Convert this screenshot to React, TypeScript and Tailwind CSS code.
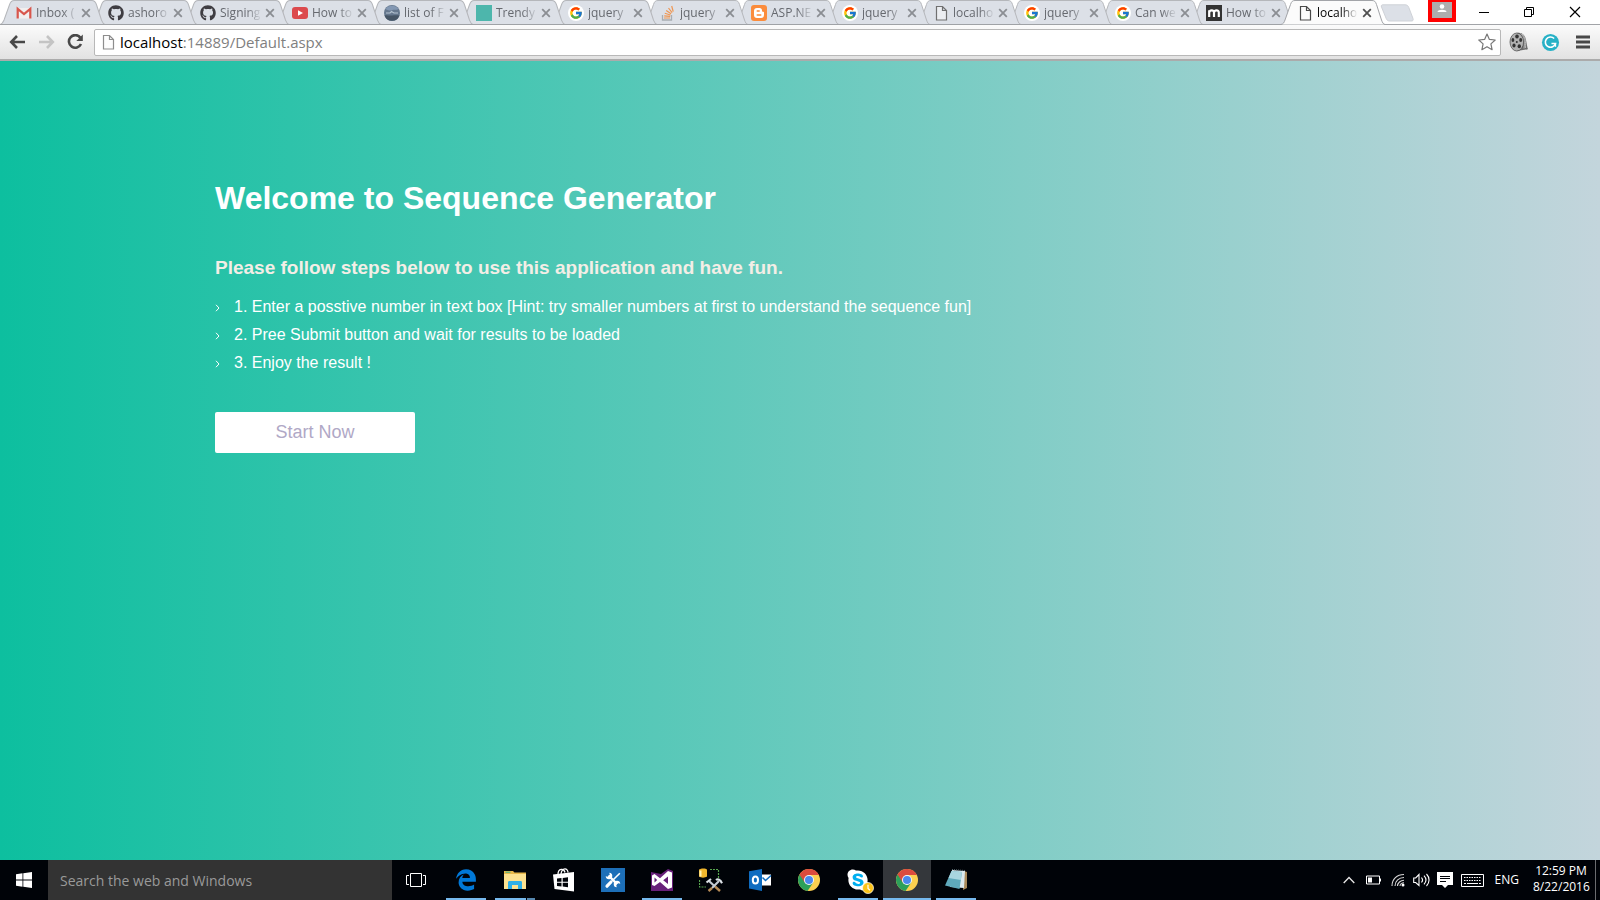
import type { ReactNode } from "react";
import { FaEdgeLegacy, FaGithub, FaSkype } from "react-icons/fa6";
import { FcGoogle } from "react-icons/fc";

/* ---------- favicons ---------- */

const GmailIcon = () => (
  <svg viewBox="0 0 16 16" className="size-4">
    <rect x="1.5" y="3" width="13" height="10.500" fill="#f1eeee" />
    <path d="M1.700 13.500V3.800L8 9l6.300-5.200v9.700" fill="none" stroke="#d8564c" strokeWidth="2.200" />
  </svg>
);

const GithubIcon = () => <FaGithub className="size-4 text-[#3f3d42]" />;

const YoutubeIcon = () => (
  <svg viewBox="0 0 16 16" className="size-4">
    <rect x="0" y="2" width="16" height="12" rx="3" fill="#dc4a4d" />
    <path d="M6 5.200v5.600L11 8z" fill="#fff" />
  </svg>
);

const SphereIcon = () => (
  <svg viewBox="0 0 16 16" className="size-4">
    <circle cx="8" cy="8" r="8" fill="#66788e" />
    <path d="M1.500 4a8 8 0 0 1 13 0c-2 1.500-4 0-6 1S4 5.500 1.500 4z" fill="#8398b3" />
    <path d="M.5 10.500c3-1 5 .5 7.500 0s5-.5 7.500 0a8 8 0 0 1-15 0z" fill="#465565" />
    <path d="M2 8h4l1.500-1.500L10 8h4" fill="none" stroke="#b4c2cf" strokeWidth="1.200" />
  </svg>
);

const SwatchIcon = () => <span className="block size-4 bg-[#4db6ac]" />;

const GoogleIcon = () => (
  <span className="flex size-4 items-center justify-center rounded-full bg-white">
    <FcGoogle className="size-3.5" />
  </span>
);

const StackIcon = () => (
  <svg viewBox="0 0 16 16" className="size-4" fill="none">
    <path d="M2.500 10v5h9v-5" stroke="#a8adb3" strokeWidth="1.300" />
    <path d="M4 13h6M4.200 10.800l6 .6M4.800 8.300l5.700 1.700M6.200 5.500l4.900 3.200M8.500 3l3.600 4.700M11.700 1l1.500 5.600" stroke="#ef9550" strokeWidth="1.200" />
  </svg>
);

const BloggerIcon = () => (
  <svg viewBox="0 0 16 16" className="size-4">
    <rect width="16" height="16" rx="3" fill="#fb8c3c" />
    <path
      d="M6 3h2.500A2.500 2.500 0 0 1 11 5.500c0 1 .3 1.300 1.200 1.300.5 0 .8.300.8.800V10a3 3 0 0 1-3 3H6a3 3 0 0 1-3-3V6a3 3 0 0 1 3-3z"
      fill="#fff"
    />
    <path d="M6.200 6h2M6.200 10h3.600" stroke="#fb8c3c" strokeWidth="1.400" strokeLinecap="round" />
  </svg>
);

const PageIcon = ({ stroke = "#707070" }: { stroke?: string }) => (
  <svg viewBox="0 0 16 16" className="size-4" fill="none">
    <path d="M3.500 1.500h6l4 4v9.500h-10zM9.500 1.500v4h4" fill="#fbfbfb" fillOpacity=".5" stroke={stroke} strokeWidth="1.200" />
  </svg>
);

const MIcon = () => (
  <svg viewBox="0 0 16 16" className="size-4">
    <rect width="16" height="16" fill="#333" />
    <path d="M3.200 12V5.200M3.200 7.500C3.500 5 8 4.300 8 7.500V12M8 7.500C8.300 5 12.800 4.300 12.800 7.500V12" fill="none" stroke="#fff" strokeWidth="2.200" />
  </svg>
);

/* ---------- browser chrome ---------- */

type Tab = { title: string; icon: ReactNode; wide?: boolean; active?: boolean };

const tabs: Tab[] = [
  { title: "Inbox (", icon: <GmailIcon />, wide: true },
  { title: "ashoro", icon: <GithubIcon />, wide: true },
  { title: "Signing", icon: <GithubIcon />, wide: true },
  { title: "How to", icon: <YoutubeIcon />, wide: true },
  { title: "list of F", icon: <SphereIcon />, wide: true },
  { title: "Trendy", icon: <SwatchIcon />, wide: true },
  { title: "jquery", icon: <GoogleIcon />, wide: true },
  { title: "jquery", icon: <StackIcon /> },
  { title: "ASP.NE", icon: <BloggerIcon /> },
  { title: "jquery", icon: <GoogleIcon /> },
  { title: "localho", icon: <PageIcon /> },
  { title: "jquery", icon: <GoogleIcon /> },
  { title: "Can we", icon: <GoogleIcon /> },
  { title: "How to", icon: <MIcon /> },
  { title: "localho", icon: <PageIcon stroke="#4a4a4a" />, active: true },
];

function BrowserTab({ tab, order }: { tab: Tab; order: number }) {
  return (
    <li
      className={tab.wide ? "relative flex min-w-0 flex-[92]" : "relative flex min-w-0 flex-[91]"}
      style={{ zIndex: order }}
    >
      <svg
        viewBox="0 0 104 25"
        preserveAspectRatio="none"
        className="absolute top-0 left-0 h-[25px] w-[calc(100%+13px)]"
      >
        <path
          d="M0 24.500C2.500 24 3 22.500 4 20L9.500 4.500C10.500 1.500 11.500.5 14 .5H91C93.500.5 94.500 1.500 95.500 4.500L100.500 20C101.500 22.500 102 24 104 24.500"
          fill={tab.active ? "#fbfbfb" : "#dce0e7"}
          stroke={tab.active ? "#a2a4a8" : "#b5b7bb"}
        />
        {!tab.active && <path d="M0 24.500H104" stroke="#9fa2a6" />}
      </svg>
      <div className="relative flex h-6 w-full min-w-0 items-center pt-0.5 pl-4">
        <span className="shrink-0">{tab.icon}</span>
        <a
          href="#tab"
          className={
            tab.active
              ? "ml-1 w-11 shrink-0 font-['Open_Sans','Noto_Sans',sans-serif] text-xs whitespace-nowrap text-black [mask-image:linear-gradient(to_right,black_55%,transparent_92%)]"
              : "ml-1 w-11 shrink-0 font-['Open_Sans','Noto_Sans',sans-serif] text-xs whitespace-nowrap text-[#66696f] [mask-image:linear-gradient(to_right,black_60%,transparent_96%)]"
          }
        >
          {tab.title}
        </a>
        <button type="button" aria-label="Close tab" className="ml-px shrink-0">
          <svg viewBox="0 0 10 10" className="size-2.5">
            <path d="M1.200 1.200l7.600 7.600M8.800 1.200L1.200 8.800" stroke={tab.active ? "#505050" : "#8b8e93"} strokeWidth="1.800" />
          </svg>
        </button>
      </div>
    </li>
  );
}

function TabStrip() {
  return (
    <div className="flex h-[25px] bg-white shadow-[inset_0_-1px_0_#a2a4a8]">
      <ul className="isolate flex min-w-0 flex-1">
        {tabs.map((tab, i) => (
          <BrowserTab key={i} tab={tab} order={tab.active ? 30 : 20 - i} />
        ))}
      </ul>
      <div className="flex h-6 w-[228px] shrink-0 items-start pl-2">
        <button type="button" aria-label="New tab" className="mt-1">
          <svg viewBox="0 0 34 18" className="h-[18px] w-[34px]">
            <path d="M3 .8H25C27 .8 28 1.500 28.800 3.500L33 14.500C33.500 16.500 33 17 31 17H10C8 17 7 16.500 6.200 14.500L1.500 3C1 1.500 1.500.8 3 .8z" fill="#dce0e7" stroke="#cfd2d7" />
          </svg>
        </button>
        <button type="button" aria-label="Profile" className="ml-[14px] border-4 border-t-2 border-[#f00] bg-[#adadad]">
          <svg viewBox="0 0 20 16" className="h-4 w-5">
            <circle cx="10" cy="4.500" r="2.300" fill="#fff" />
            <path d="M5.500 10C5.500 7 14.500 7 14.500 10z" fill="#fff" />
          </svg>
        </button>
        <button type="button" aria-label="Minimize" className="ml-[22px] pt-1.5">
          <svg viewBox="0 0 12 12" className="size-3"><path d="M1 6.500H11" stroke="#000" /></svg>
        </button>
        <button type="button" aria-label="Restore" className="ml-[33px] pt-1.5">
          <svg viewBox="0 0 12 12" className="size-3" fill="none" stroke="#000">
            <path d="M1.500 3.500h7v7h-7zM3.500 3.500v-2h7v7h-2" />
          </svg>
        </button>
        <button type="button" aria-label="Close" className="ml-[34px] pt-1.5">
          <svg viewBox="0 0 12 12" className="size-3" fill="none" stroke="#000" strokeWidth="1.200">
            <path d="M1 1l10 10M11 1L1 11" />
          </svg>
        </button>
      </div>
    </div>
  );
}

function Toolbar() {
  return (
    <div className="flex h-9 items-center border-b-2 border-[#ababab] bg-linear-to-b from-[#fbfbfb] to-[#e2e2e2] pr-2.5 pl-[9px]">
      <button type="button" aria-label="Back">
        <svg viewBox="0 0 16 16" className="size-4" fill="none" stroke="#484848" strokeWidth="2.600">
          <path d="M2 8H16M8 2L2.200 8 8 14" />
        </svg>
      </button>
      <button type="button" aria-label="Forward" className="ml-[14px]">
        <svg viewBox="0 0 16 16" className="size-4" fill="none" stroke="#c4c4c4" strokeWidth="2.600">
          <path d="M0 8H14M8 2l5.800 6L8 14" />
        </svg>
      </button>
      <button type="button" aria-label="Reload" className="ml-3">
        <svg viewBox="0 0 16 16" className="size-4">
          <path d="M13.300 3.600A6.300 6.300 0 1 0 14 10" fill="none" stroke="#484848" strokeWidth="2.600" />
          <path d="M15.800.5V7H9.300z" fill="#484848" />
        </svg>
      </button>
      <div className="ml-[11px] flex h-[27px] min-w-0 flex-1 items-center rounded-xs border border-[#b8b8b8] bg-white pr-1 pl-[5px]">
        <PageIcon stroke="#8d8d8d" />
        <a
          href="#address"
          className="ml-1 flex-1 font-['Open_Sans','Noto_Sans',sans-serif] text-[15px] leading-6 text-[#808080]"
        >
          <span className="text-black">localhost</span>:14889/Default.aspx
        </a>
        <button type="button" aria-label="Bookmark this page">
          <svg viewBox="0 0 18 18" className="size-[18px]">
            <path d="M9 1l2.400 5.400 5.800.6-4.300 3.900 1.200 5.800L9 13.700l-5.100 3 1.200-5.800L.8 7l5.800-.6z" fill="#fff" stroke="#777" strokeWidth="1.200" strokeLinejoin="round" />
          </svg>
        </button>
      </div>
      <button type="button" aria-label="Film extension" className="ml-2">
        <svg viewBox="0 0 20 20" className="size-5">
          <path d="M8 1c5-1 8 2 9 7l1.500 8c1 1 0 2-1.500 1.500L8 19z" fill="#6a6a6a" />
          <path d="M11 1.500c4 2 5 8 4 15M13 2c3 2.500 4 8 3.500 14" fill="none" stroke="#c9c9c9" strokeWidth=".8" />
          <ellipse cx="7.800" cy="10" rx="6.800" ry="9" fill="#b2b2b2" stroke="#555" strokeWidth=".8" />
          <g fill="#333">
            <ellipse cx="8" cy="4.600" rx="1.800" ry="2" />
            <ellipse cx="3.900" cy="8" rx="1.400" ry="1.900" />
            <ellipse cx="11.700" cy="8" rx="1.500" ry="2" />
            <ellipse cx="5" cy="13.500" rx="1.600" ry="1.900" />
            <ellipse cx="10.300" cy="14.300" rx="1.700" ry="2" />
            <circle cx="7.800" cy="10" r="1" />
          </g>
        </svg>
      </button>
      <button type="button" aria-label="Grammar extension" className="ml-3">
        <svg viewBox="0 0 20 20" className="size-[19px]">
          <circle cx="10" cy="10" r="9" fill="#27b1c6" />
          <path d="M13.800 5.800A5.400 5.400 0 1 0 15.200 11H11" fill="none" stroke="#fff" strokeWidth="1.700" />
          <path d="M15.300 10.500v4" stroke="#fff" strokeWidth="1.300" />
        </svg>
      </button>
      <button type="button" aria-label="Menu" className="ml-4">
        <svg viewBox="0 0 14 14" className="size-[14px]">
          <path d="M0 2h14M0 7h14M0 12h14" stroke="#484848" strokeWidth="3" />
        </svg>
      </button>
    </div>
  );
}

/* ---------- page ---------- */

const steps = [
  "1. Enter a posstive number in text box [Hint: try smaller numbers at first to understand the sequence fun]",
  "2. Pree Submit button and wait for results to be loaded",
  "3. Enjoy the result !",
];

function WelcomePage() {
  return (
    <main className="flex-1 bg-linear-to-r/srgb from-[#0dbf9f] to-[#c3d5dc] px-4 pt-[114px] font-['Liberation_Sans',Arial,sans-serif]">
      <div className="mx-auto max-w-[1170px]">
        <h1 className="text-[32px] leading-[46px] font-bold text-white">Welcome to Sequence Generator</h1>
        <h2 className="mt-[33px] text-[19px] leading-7 font-bold text-[#f3eee6]">
          Please follow steps below to use this application and have fun.
        </h2>
        <ul className="mt-[11px] text-base leading-7 text-white">
          {steps.map((step) => (
            <li key={step} className="flex items-center">
              <svg viewBox="0 0 6 8" className="mt-0.5 mr-[13px] h-2 w-1.5" fill="none">
                <path d="M1 .8L4 4 1 7.200" stroke="#fff" />
              </svg>
              {step}
            </li>
          ))}
        </ul>
        <button
          type="button"
          className="mt-[35px] h-[41px] w-[200px] rounded-xs bg-white pb-0.5 text-lg text-[#b0a8c6]"
        >
          Start Now
        </button>
      </div>
    </main>
  );
}

/* ---------- taskbar ---------- */

const ExplorerIcon = () => (
  <svg viewBox="0 0 24 24" className="size-6">
    <path d="M1 3h9l1.500 1.500H23V21H1z" fill="#e9b94a" />
    <path d="M1 6h22v15H1z" fill="#fde290" />
    <path d="M5 21v-6.500c0-1 .6-1.500 1.500-1.500h11c1 0 1.500.5 1.500 1.500V21h-4v-4h-6v4z" fill="#2fb0e8" />
    <path d="M2.500 4.200h5" stroke="#3bb58c" />
  </svg>
);

const StoreIcon = () => (
  <svg viewBox="0 0 24 24" className="size-6">
    <path d="M6 6.500C6 0 12 0 13 4.500M9 6C10-1 16 0 16 4.500" fill="none" stroke="#fff" strokeWidth="1.300" />
    <path d="M1 6.500L22 4v19.500L2.500 21z" fill="#fff" />
    <path d="M5 10.500l4.500-.5v3.700H5zM10.700 9.900l5.300-.6v4.400h-5.300zM5 14.800h4.500v3.700L5 18zM10.700 14.800H16v4.400l-5.300-.6z" fill="#000308" />
  </svg>
);

const ToolsIcon = () => (
  <svg viewBox="0 0 24 24" className="size-6">
    <rect width="24" height="24" fill="#1d6fb8" />
    <path d="M7.500 7.500l8.500 8.500" stroke="#fff" strokeWidth="2.400" />
    <path d="M8.300 4.700A3.300 3.300 0 1 1 4.700 8.300L7 8.800 8.800 7zM19.300 15.700a3.300 3.300 0 1 0-3.600 3.600L15.300 17l1.700-1.700z" fill="#fff" />
    <path d="M18.800 5.200L11 13" stroke="#fff" strokeWidth="1.600" />
    <path d="M10 14l-4 4.200" stroke="#fff" strokeWidth="3.200" strokeLinecap="round" />
  </svg>
);

const VisualStudioIcon = () => (
  <svg viewBox="0 0 24 24" className="size-6">
    <path d="M1 4l10 2 7-5 5 2v20H1z" fill="#68217a" />
    <path d="M18 3l4 1.500v15L18 21l-8-7-5.500 4L2 17V7.500L4.500 6l5.500 4.300zM18 8.500l-4.800 3.800 4.800 3.700zM4.500 9.500v5L7.200 12z" fill="#fff" fillRule="evenodd" />
  </svg>
);

const DatabaseToolsIcon = () => (
  <svg viewBox="0 0 24 24" className="size-6" fill="none">
    <path d="M0 1.500C2 0 7 0 8 1.500v7C6 10 2 10 0 8.500z" fill="#f0b62c" />
    <path d="M1.500 2.500v6" stroke="#fff2b5" strokeWidth="2" />
    <path d="M11 1.500h8.500V10M.5 12v7H7" stroke="#57a44e" strokeWidth="1.200" strokeDasharray="2 1" />
    <path d="M10 13l6 5.500" stroke="#c5ccd3" strokeWidth="2.200" />
    <path d="M16 18.500l5 4.500" stroke="#b58a55" strokeWidth="2.400" />
    <path d="M20 13L13 20" stroke="#c5ccd3" strokeWidth="2.200" />
    <path d="M13 20L9.500 23" stroke="#b58a55" strokeWidth="2.400" />
    <path d="M7.500 14.500l4.500-3.500M17 12c1.500-1.200 3-.8 4.500.7l1.500 2.500" stroke="#dbe1e6" strokeWidth="2.200" />
  </svg>
);

const OutlookIcon = () => (
  <svg viewBox="0 0 24 24" className="size-6">
    <path d="M1 3.200L14 1v22L1 20.500z" fill="#0f6cc0" />
    <ellipse cx="7.400" cy="12" rx="2.600" ry="3.600" fill="none" stroke="#fff" strokeWidth="2" />
    <path d="M14 6.500h9v11h-9z" fill="#fff" />
    <path d="M14.500 9.500l3 3L23 7.500" fill="none" stroke="#0f6cc0" strokeWidth="1.500" />
  </svg>
);

const ChromeIcon = () => (
  <svg viewBox="0 0 24 24" className="size-6">
    <circle cx="12" cy="12" r="11" fill="#fcd04f" />
    <path d="M12 12L2.500 6.500A11 11 0 0 0 10.500 22.900L16.300 14.500z" fill="#2da05a" />
    <path d="M2.500 6.500A11 11 0 0 1 21.900 7H12L7.700 14.500z" fill="#dc4b3e" />
    <circle cx="12" cy="12" r="5" fill="#f4f6f8" />
    <circle cx="12" cy="12" r="4" fill="#4a88ee" />
  </svg>
);

const SkypeIcon = () => (
  <span className="relative block size-6">
    <span className="absolute top-1 left-1 block size-4 rounded-full bg-[#00aff0]" />
    <FaSkype className="relative size-6 text-white" />
    <svg viewBox="0 0 12 12" className="absolute -right-1 -bottom-0.5 size-3">
      <circle cx="6" cy="6" r="5.500" fill="#fcc419" stroke="#fff" strokeWidth=".7" />
      <path d="M6 2.800V6.500l2 1.700" fill="none" stroke="#fff" strokeWidth="1.200" />
    </svg>
  </span>
);

const NotepadIcon = () => (
  <svg viewBox="0 0 24 24" className="size-6">
    <path d="M20 3l3 1v16l-4 2z" fill="#a9895a" />
    <path d="M8 2l13 1-1 17-14-1z" fill="#dce9ee" />
    <path d="M7.500 3L18 4 15.500 21 1 17.500z" fill="#5fa9bb" />
    <path d="M7.500 3L18 4 16.800 12 4.500 10z" fill="#a9d5df" />
    <path d="M8 1.500l13 1" stroke="#5b6b70" strokeDasharray="1 1" />
  </svg>
);

type AppEntry = { name: string; icon: ReactNode; state?: "open" | "multiple" | "active" };

const apps: AppEntry[] = [
  { name: "Microsoft Edge", icon: <FaEdgeLegacy className="size-[22px] text-[#0078d7]" />, state: "open" },
  { name: "File Explorer", icon: <ExplorerIcon />, state: "multiple" },
  { name: "Store", icon: <StoreIcon /> },
  { name: "Support tools", icon: <ToolsIcon /> },
  { name: "Visual Studio", icon: <VisualStudioIcon />, state: "open" },
  { name: "Database tools", icon: <DatabaseToolsIcon /> },
  { name: "Outlook", icon: <OutlookIcon /> },
  { name: "Chrome", icon: <ChromeIcon /> },
  { name: "Skype", icon: <SkypeIcon />, state: "open" },
  { name: "Chrome window", icon: <ChromeIcon />, state: "active" },
  { name: "Notepad", icon: <NotepadIcon />, state: "open" },
];

function AppButton({ app }: { app: AppEntry }) {
  return (
    <button
      type="button"
      aria-label={app.name}
      className={
        app.state === "active"
          ? "relative flex h-10 w-12 items-center justify-center bg-[#34373b]"
          : "relative flex h-10 w-12 items-center justify-center"
      }
    >
      {app.icon}
      {app.state === "open" && <span className="absolute inset-x-1 bottom-0 h-0.5 bg-[#76b9ed]" />}
      {app.state === "active" && <span className="absolute inset-x-0 bottom-0 h-0.5 bg-[#76b9ed]" />}
      {app.state === "multiple" && (
        <span className="absolute inset-x-1 bottom-0 flex h-0.5 gap-px">
          <span className="flex-1 bg-[#76b9ed]" />
          <span className="w-2 bg-[#5688b0]" />
        </span>
      )}
    </button>
  );
}

function Taskbar() {
  return (
    <footer className="flex h-10 items-center bg-[#000308] font-['Open_Sans','Noto_Sans',sans-serif] text-white">
      <button type="button" aria-label="Start" className="flex h-10 w-12 items-center justify-center">
        <svg viewBox="0 0 16 16" className="size-4" fill="#fff">
          <path d="M0 2.200L6.500 1.300V7.500H0zM7.300 1.200L16 0v7.500H7.300zM0 8.400h6.500v6.300L0 13.800zM7.300 8.400H16V16l-8.700-1.200z" />
        </svg>
      </button>
      <input
        type="text"
        aria-label="Search the web and Windows"
        placeholder="Search the web and Windows"
        className="h-10 w-[344px] bg-[#333] px-3 text-sm text-white placeholder:text-[#9a9a9a]"
      />
      <button type="button" aria-label="Task view" className="flex h-10 w-12 items-center justify-center">
        <svg viewBox="0 0 20 14" className="h-[14px] w-5" fill="none" stroke="#fff">
          <path d="M4.500.5h11v13h-11zM3 2.500H.5v9H3M17 2.500h2.500v9H17" />
        </svg>
      </button>
      <div className="ml-0.5 flex gap-px">
        {apps.map((app) => (
          <AppButton key={app.name} app={app} />
        ))}
      </div>
      <div className="ml-auto flex h-10 items-center">
        <svg viewBox="0 0 12 8" className="h-2 w-3" fill="none">
          <path d="M.7 7L6 1.500 11.300 7" stroke="#e8e8e8" strokeWidth="1.300" />
        </svg>
        <svg viewBox="0 0 16 10" className="ml-[11px] h-2.5 w-4" fill="none">
          <path d="M.5 1h13v8H.5z" stroke="#fff" />
          <path d="M14.500 3.500v3" stroke="#fff" />
          <path d="M2 2.500h4v5H2z" fill="#fff" />
        </svg>
        <svg viewBox="0 0 14 14" className="ml-[9px] size-[14px]" fill="none" stroke="#d8d8d8" strokeWidth="1.100">
          <path d="M1 13C1 6 6 1.500 13 1.500M4 13c0-5 4-8.500 9-8.500M6.500 13c0-3 3-5.800 6.500-5.800M9 13c0-2 2-3.300 4-3.300" />
          <circle cx="12" cy="12" r="1.500" fill="#fff" stroke="none" />
        </svg>
        <svg viewBox="0 0 17 14" className="ml-2 h-[14px] w-[17px]" fill="none" stroke="#fff" strokeWidth="1.100">
          <path d="M.7 5v4.500h2L6 12.500V1.500L2.700 5zM8.500 4.500c1.300 1.500 1.300 3.500 0 5M11 2.700c2.400 2.600 2.400 6 0 8.600M13.500 1c3.400 3.600 3.400 8.400 0 12" />
        </svg>
        <svg viewBox="0 0 16 16" className="ml-[7px] size-4">
          <path d="M0 0h16v13h-5l-3 3-3-3H0z" fill="#fff" />
          <path d="M3 4.500h10M3 6.500h10M3 9.500h6" stroke="#000308" />
        </svg>
        <svg viewBox="0 0 23 13" className="ml-2 h-[13px] w-[23px]" fill="none" stroke="#fff">
          <path d="M.5.500h22v12H.5z" />
          <path d="M3 3.500h17M3 6.500h17" strokeDasharray="1.500 1" />
          <path d="M3 9.500h2M6 9.500h11M18 9.500h2" />
        </svg>
        <span className="ml-[11px] text-xs">ENG</span>
        <div className="ml-[14px] w-[56px] pb-0.5 text-center text-xs leading-4 whitespace-nowrap">
          <div>12:59 PM</div>
          <div>8/22/2016</div>
        </div>
        <div className="ml-1.5 h-10 w-[5px] border-l border-[#6a6c6f]" />
      </div>
    </footer>
  );
}

export default function App() {
  return (
    <div className="flex min-h-screen flex-col">
      <header>
        <TabStrip />
        <Toolbar />
      </header>
      <WelcomePage />
      <Taskbar />
    </div>
  );
}
